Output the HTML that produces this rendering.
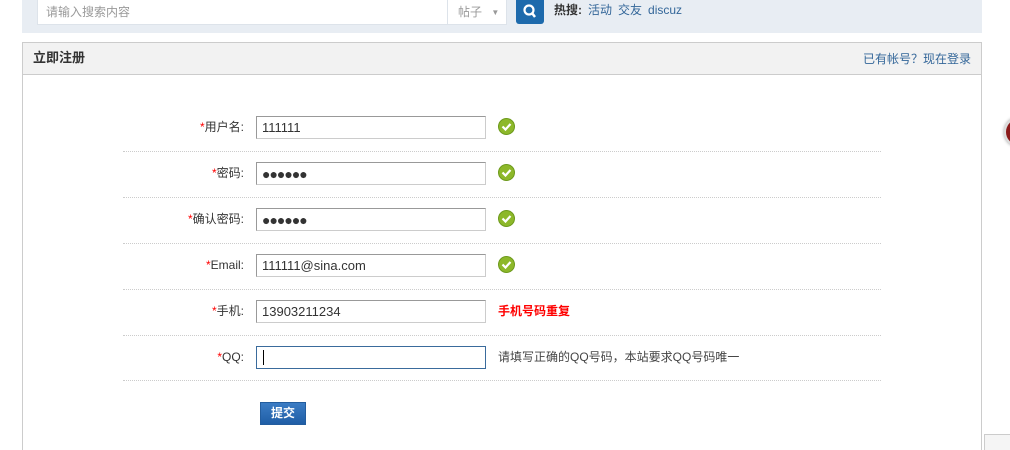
<!DOCTYPE html>
<html><head><meta charset="utf-8"><style>
*{margin:0;padding:0;box-sizing:border-box}
html,body{width:1010px;height:450px;overflow:hidden}
body{background:#fff;position:relative;font-family:"Liberation Sans","Noto Sans CJK SC",sans-serif;font-size:12px;color:#333;line-height:16px}
.a{position:absolute}
.bar{left:22px;top:0;width:960px;height:33px;background:#e8edf3}
.sinput{left:37px;top:0;width:411px;height:25px;background:#fff;border:1px solid #dde3ea;border-top:0;color:#999;padding:4px 8px;font-size:12px}
.ssel{left:447px;top:0;width:60px;height:25px;background:#fff;border:1px solid #dde3ea;border-top:0;color:#999;padding:4px 0 0 10px;white-space:nowrap}
.sbtn{left:516px;top:0;width:28px;height:24px;background:#1d6aac;border-radius:0 0 3px 3px}
.hot{left:554px;top:2px;color:#333}
.hot b{font-weight:bold}
.hot span{color:#336699;margin-left:6px}
.box{left:22px;top:42px;width:960px;height:420px;border:1px solid #ccc}
.hd{left:23px;top:43px;width:958px;height:32px;background:#f2f2f2;border-bottom:1px solid #ccc}
.hd b{position:absolute;left:10px;top:7px;font-size:13px;color:#333}
.hd span{position:absolute;right:10px;top:8px;color:#336699}
.lab{width:120px;left:124px;text-align:right;font-size:12px}
.lab i{color:#f00;font-style:normal}
.inp{left:256px;width:230px;height:23px;border:1px solid #ccc;border-top-color:#999;border-left-color:#999;padding:3px 5px;font-size:13px;color:#333;background:#fff}
.dots{left:123px;width:758px;height:0;border-top:1px dotted #ccc}
.ok{left:498px;width:17px;height:17px}
.btn{left:260px;top:402px;width:46px;height:23px;background:linear-gradient(#3b7cc4,#1f5ea6);border:1px solid #235d9e;color:#fff;font-weight:bold;text-align:center;line-height:21px}
</style></head><body>
<div class="a bar"></div>
<div class="a sinput">请输入搜索内容</div>
<div class="a ssel">帖子 <span style="font-size:8px;margin-left:6px;vertical-align:1px">▼</span></div>
<div class="a sbtn"><svg width="28" height="24"><circle cx="13" cy="10" r="4.5" fill="none" stroke="#fff" stroke-width="2.2"/><line x1="16" y1="13" x2="19" y2="17" stroke="#fff" stroke-width="2.5"/></svg></div>
<div class="a hot"><b>热搜:</b><span>活动</span><span>交友</span><span>discuz</span></div>
<div class="a box"></div>
<div class="a hd"><b>立即注册</b><span>已有帐号？现在登录</span></div>

<div class="a lab" style="top:119px"><i>*</i>用户名:</div>
<div class="a inp" style="top:116px">111111</div>
<svg class="a ok" style="top:118px" viewBox="0 0 17 17"><circle cx="8.5" cy="8.5" r="8" fill="#8db82a" stroke="#6d9a1c"/><path d="M4.5 8.5l3 3 5-5.5" fill="none" stroke="#fff" stroke-width="2.2"/></svg>
<div class="a dots" style="top:151px"></div>

<div class="a lab" style="top:165px"><i>*</i>密码:</div>
<div class="a inp" style="top:162px;font-size:14px;letter-spacing:-1px">●●●●●●</div>
<svg class="a ok" style="top:164px" viewBox="0 0 17 17"><circle cx="8.5" cy="8.5" r="8" fill="#8db82a" stroke="#6d9a1c"/><path d="M4.5 8.5l3 3 5-5.5" fill="none" stroke="#fff" stroke-width="2.2"/></svg>
<div class="a dots" style="top:197px"></div>

<div class="a lab" style="top:211px"><i>*</i>确认密码:</div>
<div class="a inp" style="top:208px;font-size:14px;letter-spacing:-1px">●●●●●●</div>
<svg class="a ok" style="top:210px" viewBox="0 0 17 17"><circle cx="8.5" cy="8.5" r="8" fill="#8db82a" stroke="#6d9a1c"/><path d="M4.5 8.5l3 3 5-5.5" fill="none" stroke="#fff" stroke-width="2.2"/></svg>
<div class="a dots" style="top:243px"></div>

<div class="a lab" style="top:257px"><i>*</i>Email:</div>
<div class="a inp" style="top:254px">111111@sina.com</div>
<svg class="a ok" style="top:256px" viewBox="0 0 17 17"><circle cx="8.5" cy="8.5" r="8" fill="#8db82a" stroke="#6d9a1c"/><path d="M4.5 8.5l3 3 5-5.5" fill="none" stroke="#fff" stroke-width="2.2"/></svg>
<div class="a dots" style="top:289px"></div>

<div class="a lab" style="top:303px"><i>*</i>手机:</div>
<div class="a inp" style="top:300px">13903211234</div>
<div class="a" style="left:498px;top:303px;color:#f00;font-weight:bold">手机号码重复</div>
<div class="a dots" style="top:335px"></div>

<div class="a lab" style="top:349px"><i>*</i>QQ:</div>
<div class="a inp" style="top:346px;border:1px solid #3a6b9c"><span style="display:inline-block;width:1px;height:15px;background:#000;margin-left:1px"></span></div>
<div class="a" style="left:498px;top:349px;color:#444">请填写正确的QQ号码，本站要求QQ号码唯一</div>
<div class="a dots" style="top:380px"></div>

<div class="a btn">提交</div>
<div class="a" style="left:1004px;top:117px;width:30px;height:30px;border-radius:50%;background:#8b1a1a;border:2px solid #ddd;box-shadow:0 0 3px #999"></div>
<div class="a" style="left:984px;top:434px;width:30px;height:20px;border:1px solid #ccc;background:#f5f5f5"></div>
</body></html>
